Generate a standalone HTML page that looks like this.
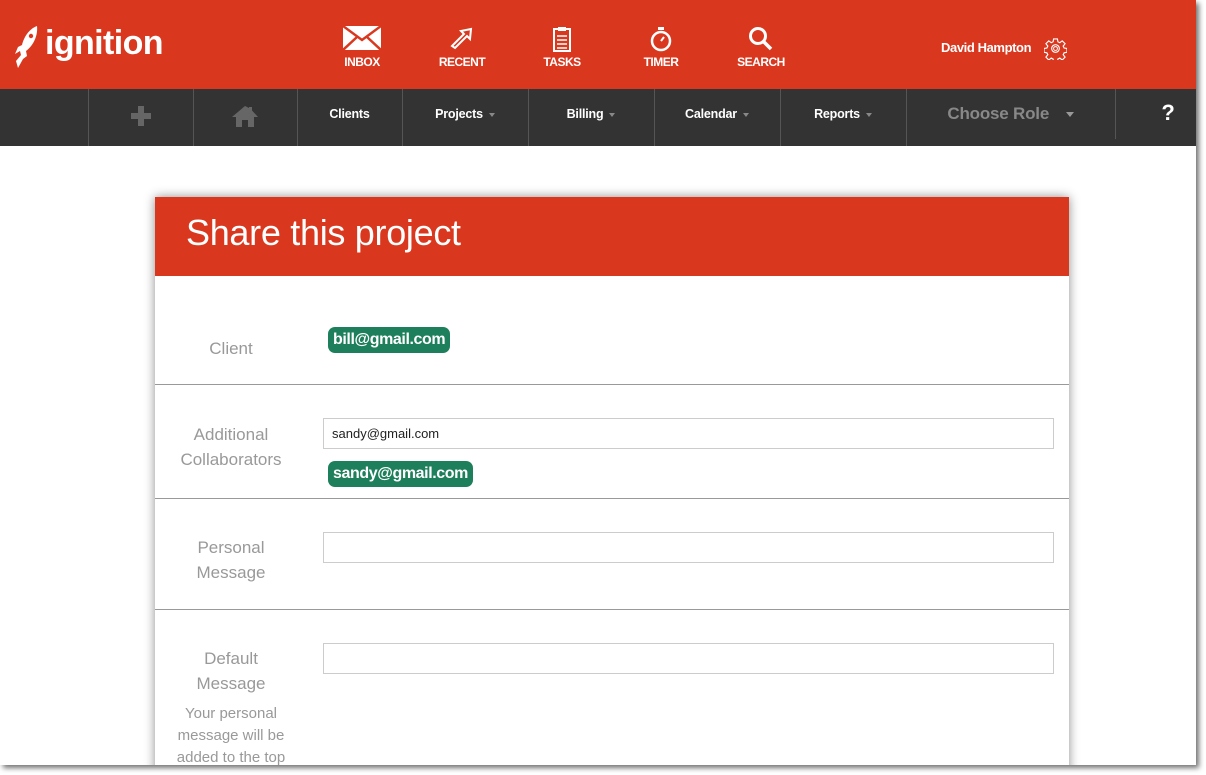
<!DOCTYPE html><html><head><style>
body{margin:0;width:1206px;height:775px;background:#fff;position:relative;overflow:hidden;font-family:"Liberation Sans",Arial,sans-serif}
.page{position:absolute;left:0;top:0;width:1196px;height:765px;background:#fff;box-shadow:3px 3px 5px rgba(0,0,0,.55);overflow:hidden}
.hdr{position:absolute;left:0;top:0;width:1196px;height:89px;background:#d9381f;color:#fff}
.nav{position:absolute;left:0;top:89px;width:1196px;height:57px;background:#333}
.sep{position:absolute;top:0;height:57px;width:1px;background:#555}
.ni{position:absolute;top:0;height:57px;line-height:50px;color:#fff;font-weight:bold;font-size:12.5px;text-align:center;letter-spacing:-.2px}
.car{display:inline-block;border-left:3.5px solid transparent;border-right:3.5px solid transparent;border-top:4px solid #888;margin-left:6px;vertical-align:middle}
.ic{position:absolute;top:26px;width:80px;text-align:center;font-size:12px;font-weight:bold;letter-spacing:-.5px}
.ic svg{position:absolute;left:50%;transform:translateX(-50%);top:0}
.ic span{position:absolute;left:0;right:0;top:29px}
.modal{position:absolute;left:155px;top:197px;width:914px;height:600px;background:#fff;box-shadow:0 0 10px rgba(0,0,0,.45)}
.mh{height:79px;background:#d9381f;color:#fff;font-size:36px;line-height:72px;padding-left:31px;letter-spacing:-.3px}
.row{position:absolute;left:0;width:914px;border-bottom:1px solid #999}
.lab{position:absolute;left:0;width:152px;text-align:center;color:#999;font-size:17px;line-height:25px}
.inp{position:absolute;left:168px;font-size:13px;line-height:29px;padding-left:8px;box-sizing:border-box;width:731px;height:31px;color:#222;border:1px solid #ccc}
.chip{position:absolute;left:173px;height:26px;line-height:26px;background:#1d7f5b;color:#fff;border-radius:7px;padding:0 5px;font-size:16px;font-weight:bold;letter-spacing:-.4px}
</style></head><body>
<div class="page">
<div class="hdr">
<svg style="position:absolute;left:12px;top:25px" width="28" height="44" viewBox="0 0 28 44"><path d="M25 1C17 4 12 12 10 20L6 22 3 29 8 26 9 30 4 36 6 43 11 34 15 31 14 26C22 20 26 10 25 1Z" fill="#fff"/><circle cx="19" cy="11" r="2.2" fill="#d9381f"/></svg>
<div style="position:absolute;left:45px;top:24px;font-size:34px;font-weight:bold;letter-spacing:-.6px">ignition</div>
<div class="ic" style="left:322px"><svg width="38" height="24" viewBox="0 0 38 24"><rect width="38" height="24" fill="#fff"/><path d="M0 0L19 14 38 0M0 24L14 11M38 24L24 11" stroke="#d9381f" stroke-width="2.5" fill="none"/></svg><span>INBOX</span></div>
<div class="ic" style="left:422px"><svg width="26" height="26" viewBox="0 0 26 26"><path d="M3 20L15 8 12 5 22 3 21 13 18 10 6 22Z" fill="none" stroke="#fff" stroke-width="2"/></svg><span>RECENT</span></div>
<div class="ic" style="left:522px"><svg width="18" height="26" viewBox="0 0 18 26"><rect x="1" y="3" width="16" height="22" fill="none" stroke="#fff" stroke-width="2"/><rect x="5" y="1" width="8" height="4" fill="#fff"/><path d="M4 10H14M4 14H14M4 18H14M4 22H14" stroke="#fff" stroke-width="1.5"/></svg><span>TASKS</span></div>
<div class="ic" style="left:621px"><svg width="24" height="26" viewBox="0 0 24 26"><rect x="9" y="1" width="6" height="3" fill="#fff"/><circle cx="12" cy="15" r="9" fill="none" stroke="#fff" stroke-width="2.5"/><path d="M12 15L15 11" stroke="#fff" stroke-width="2"/></svg><span>TIMER</span></div>
<div class="ic" style="left:721px"><svg width="26" height="26" viewBox="0 0 26 26"><circle cx="10" cy="10" r="7.5" fill="none" stroke="#fff" stroke-width="3"/><path d="M15 15L23 23" stroke="#fff" stroke-width="3.5"/></svg><span>SEARCH</span></div>
<div style="position:absolute;left:941px;top:40px;font-size:13px;font-weight:bold;letter-spacing:-.4px">David Hampton</div>
<svg style="position:absolute;left:1044px;top:37px" width="23" height="23" viewBox="0 0 24 24"><path d="M10 2h4l.5 3 2 1 2.5-2 3 3-2 2.5 1 2 3 .5v4l-3 .5-1 2 2 2.5-3 3-2.5-2-2 1-.5 3h-4l-.5-3-2-1-2.5 2-3-3 2-2.5-1-2-3-.5v-4l3-.5 1-2-2-2.5 3-3 2.5 2 2-1z" fill="none" stroke="#fff" stroke-width="1.2"/><circle cx="12" cy="12" r="4" fill="none" stroke="#fff" stroke-width="1.2"/><circle cx="12" cy="12" r="2" fill="none" stroke="#fff"/></svg>
</div>
<div class="nav">
<div class="sep" style="left:88px"></div><div class="sep" style="left:193px"></div><div class="sep" style="left:297px"></div><div class="sep" style="left:402px"></div><div class="sep" style="left:528px"></div><div class="sep" style="left:654px"></div><div class="sep" style="left:780px"></div><div class="sep" style="left:906px"></div><div class="sep" style="left:1115px;height:50px"></div>
<svg style="position:absolute;left:129px;top:15px" width="24" height="24"><path d="M9 2h6v7h7v6h-7v7H9v-7H2V9h7z" fill="#666"/></svg>
<svg style="position:absolute;left:231px;top:15px" width="28" height="24" viewBox="0 0 28 24"><path d="M14 2L1 13h4v10h6v-7h6v7h6V13h4L21 6.5V3h-3v1z" fill="#666"/></svg>
<div class="ni" style="left:297px;width:105px">Clients</div>
<div class="ni" style="left:402px;width:126px">Projects<i class="car"></i></div>
<div class="ni" style="left:528px;width:126px">Billing<i class="car"></i></div>
<div class="ni" style="left:654px;width:126px">Calendar<i class="car"></i></div>
<div class="ni" style="left:780px;width:126px">Reports<i class="car"></i></div>
<div class="ni" style="left:906px;width:209px;color:#888;font-size:17px">Choose Role <i class="car" style="margin-left:12px;border-top-color:#999;border-width:5px 4.5px 0"></i></div>
<div class="ni" style="left:1140px;width:56px;font-size:22px;line-height:48px">?</div>
</div>
<div class="modal">
<div class="mh">Share this project</div>
<div class="row" style="top:79px;height:108px"><div class="lab" style="top:60px">Client</div><div class="chip" style="top:51px">bill@gmail.com</div></div>
<div class="row" style="top:188px;height:113px"><div class="lab" style="top:37px">Additional<br>Collaborators</div><div class="inp" style="top:33px">sandy@gmail.com</div><div class="chip" style="top:76px">sandy@gmail.com</div></div>
<div class="row" style="top:302px;height:110px"><div class="lab" style="top:36px">Personal<br>Message</div><div class="inp" style="top:33px"></div></div>
<div style="position:absolute;top:413px;left:0;width:914px"><div class="lab" style="top:36px">Default<br>Message</div><div class="lab" style="top:93px;font-size:15px;line-height:22px">Your personal<br>message will be<br>added to the top</div><div class="inp" style="top:33px"></div></div>
</div>
</div>
</body></html>
